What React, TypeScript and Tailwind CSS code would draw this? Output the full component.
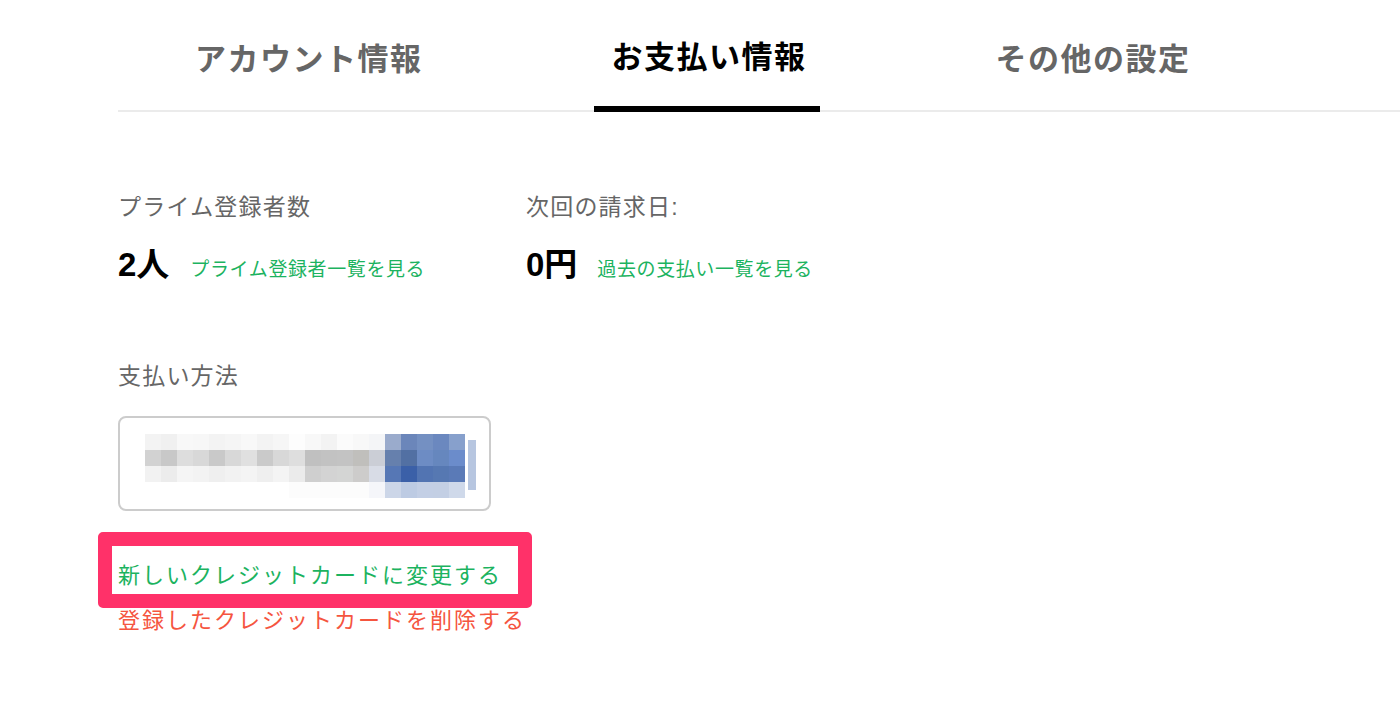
import { useState } from 'react'

const TABS = ['アカウント情報', 'お支払い情報', 'その他の設定']

// ぼかしたカード番号 (16px モザイク)
const MOSAIC: string[][] = [
  ['#f3f3f3', '#f0f0f0', '#f8f8f8', '#f7f7f7', '#f3f3f3', '#f5f5f5', '#f8f8f8', '#f3f3f3', '#f6f6f6', '#fdfdfd', '#f8f8f8', '#f3f3f3', '#fbfbfb', '#f8f8f8', '#f4f5f7', '#9aabcc', '#6b86ba', '#7490c2', '#6b88bf', '#87a0cc'],
  ['#d2d2d2', '#c8c8c8', '#dddddd', '#d8d8d8', '#c9c9c9', '#d8d8d8', '#e0e0e0', '#cacaca', '#d8d8d8', '#dedede', '#c0c0c0', '#c2c2c2', '#c3c3c3', '#c0bfbc', '#cbced6', '#6680ad', '#5270a3', '#6d8cc4', '#6687be', '#6b8ccb'],
  ['#f2f2f2', '#ececec', '#f5f5f5', '#f3f3f3', '#efefef', '#f2f2f2', '#f4f4f4', '#efefef', '#f4f4f4', '#ebebeb', '#cfcfcf', '#d3d3d3', '#d4d5d4', '#cdcccb', '#d8dce6', '#5677b5', '#3b60a8', '#5274b2', '#5678b2', '#5a7ab7'],
  ['#ffffff', '#ffffff', '#ffffff', '#ffffff', '#ffffff', '#ffffff', '#ffffff', '#ffffff', '#ffffff', '#fcfcfc', '#fcfcfc', '#fcfcfc', '#fcfcfc', '#fcfcfc', '#f5f6fa', '#ccd6e8', '#bdcbe3', '#c3cfe5', '#c3cfe4', '#cfd9ea'],
]

function CardMosaic() {
  return (
    <svg width="332" height="64" viewBox="0 0 332 64">
      {MOSAIC.map((row, r) =>
        row.map((c, i) => <rect key={`${r}-${i}`} x={i * 16} y={r * 16} width="16" height="16" fill={c} />)
      )}
      <rect x="323" y="6" width="8" height="50" fill="#b7c6e0" />
    </svg>
  )
}

export default function App() {
  const [active, setActive] = useState(1)

  return (
    <div className="min-h-[724px] bg-white font-['Liberation_Sans','Noto_Sans_CJK_JP',sans-serif]">
      {/* タブ */}
      <div className="ml-[118px] flex gap-[158px] border-b-2 border-[#ebebeb] pl-[59px]">
        {TABS.map((label, i) => (
          <button
            key={label}
            onClick={() => setActive(i)}
            className={`-mb-[2px] border-b-[6px] pl-[18px] pr-[13px] pb-[26px] text-[31px] font-bold leading-[40px] tracking-[1.5px] ${
              active === i
                ? 'border-black pt-[35px] text-black'
                : 'border-transparent pt-[40px] text-[#666666]'
            }`}
          >
            {label}
          </button>
        ))}
      </div>

      <div className="pl-[118px]">
        {/* 登録者数・請求 */}
        <div className="mt-[80px] flex">
          <div className="w-[408px]">
            <p className="text-[23px] leading-[30px] tracking-[1.2px] text-[#666666]">プライム登録者数</p>
            <div className="mt-[23px] flex items-baseline">
              <span className="text-[33px] font-bold leading-[40px] text-black">2人</span>
              <a href="#" className="ml-[21px] text-[19px] tracking-[0.6px] text-[#1cb35f]">
                プライム登録者一覧を見る
              </a>
            </div>
          </div>
          <div>
            <p className="text-[23px] leading-[30px] tracking-[1.2px] text-[#666666]">次回の請求日:</p>
            <div className="mt-[23px] flex items-baseline">
              <span className="text-[33px] font-bold leading-[40px] text-black">0円</span>
              <a href="#" className="ml-[20px] text-[19px] tracking-[0.6px] text-[#1cb35f]">
                過去の支払い一覧を見る
              </a>
            </div>
          </div>
        </div>

        {/* 支払い方法 */}
        <p className="mt-[76px] text-[23px] leading-[30px] tracking-[1.2px] text-[#666666]">支払い方法</p>
        <div className="mt-[25px] flex h-[95px] w-[373px] items-start rounded-[8px] border-2 border-[#cccccc] pl-[25px] pt-[16px]">
          <CardMosaic />
        </div>

        <div className="mt-[42px] flex flex-col items-start">
          <div className="relative">
            <a href="#" className="block text-[22px] leading-[45px] tracking-[2px] text-[#1cb35f]">
              新しいクレジットカードに変更する
            </a>
            <div className="pointer-events-none absolute left-[-20px] top-[-21px] h-[76px] w-[434px] rounded-[5px] border-[14px] border-[#ff3169]" />
          </div>
          <a href="#" className="block text-[22px] leading-[45px] tracking-[2px] text-[#f5553f]">
            登録したクレジットカードを削除する
          </a>
        </div>
      </div>
    </div>
  )
}
